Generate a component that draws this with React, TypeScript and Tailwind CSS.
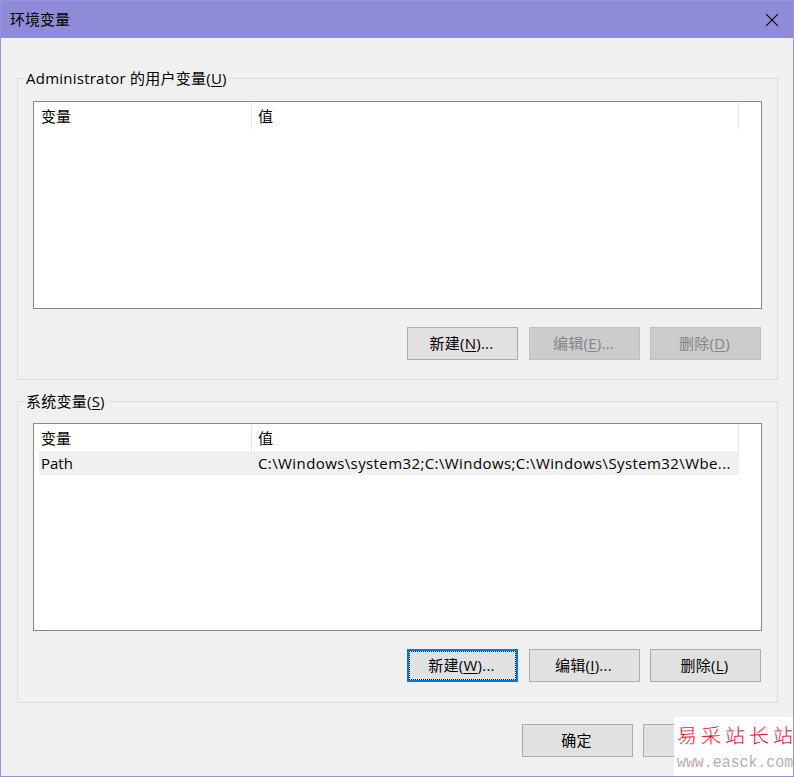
import type { ReactNode } from 'react';

const family = "font-['Open_Sans','Noto_Sans_CJK_SC',sans-serif]";

function Key({ children }: { children: string }) {
  return <span className="underline decoration-1 underline-offset-[2px] [text-decoration-skip-ink:none]">{children}</span>;
}

type ButtonProps = { children?: ReactNode; disabled?: boolean; focused?: boolean };

function Button({ children, disabled, focused }: ButtonProps) {
  const tone = disabled
    ? 'border border-[#bfbfbf] bg-[#cccccc] text-[#838383]'
    : focused
      ? 'border-2 border-[#0078d7] bg-[#e1e1e1]'
      : 'border border-[#adadad] bg-[#e1e1e1]';
  return (
    <button disabled={disabled} className={`h-[33px] w-[111px] shrink-0 tracking-[0.25px] ${tone}`}>
      <span
        className={`flex h-full items-center justify-center whitespace-nowrap pb-[2px] pr-[2px] leading-[18px] ${focused ? 'border border-dotted border-black' : ''}`}
      >
        <span>{children}</span>
      </span>
    </button>
  );
}

function VariableList({ rows }: { rows: { name: string; value: string }[] }) {
  return (
    <div className="h-[208px] w-[729px] border border-[#828790] bg-white pl-[5px] pt-px">
      <div className="flex h-[26px] w-[700px] leading-[26px]">
        <div className="w-[213px] border-r border-[#e5e5e5] pl-[2px]">变量</div>
        <div className="flex-1 border-r border-[#e5e5e5] pl-[6px]">值</div>
      </div>
      {rows.map((row) => (
        <div key={row.name} className="flex h-6 w-[700px] bg-[#f0f0f0] leading-6">
          <div className="w-[213px] pl-[2px]">{row.name}</div>
          <div className="flex-1 whitespace-nowrap pl-[6px] tracking-[0.4px]">{row.value}</div>
        </div>
      ))}
    </div>
  );
}

function Group({ title, className, children }: { title: ReactNode; className: string; children: ReactNode }) {
  return (
    <section className={`relative h-[302px] w-[761px] border border-[#dcdcdc] pl-[15px] ${className}`}>
      <h2 className="absolute -top-[12px] left-[6px] whitespace-nowrap bg-[#f0f0f0] px-[2px] leading-[22px] tracking-[0.24px]">{title}</h2>
      {children}
    </section>
  );
}

export default function App() {
  return (
    <div className={`relative h-[777px] w-[794px] overflow-hidden border border-[#9893dc] bg-[#f0f0f0] text-[15px] text-black ${family}`}>
      <header className="flex h-[37px] items-center justify-between bg-[#908bd8] pl-[9px] pr-[15px]">
        <h1 className="leading-[37px]">环境变量</h1>
        <svg width="12" height="12" viewBox="0 0 12 12" stroke="#000" strokeWidth="1.1">
          <path d="M0 0l12 12M12 0L0 12" />
        </svg>
      </header>
      <main className="pl-4 pt-10">
        <Group className="pt-[22px]" title={<>Administrator 的用户变量(<Key>U</Key>)</>}>
          <VariableList rows={[]} />
          <div className="mt-[18px] flex pl-[374px]">
            <Button>新建(<Key>N</Key>)...</Button>
            <div className="ml-[11px] flex gap-[10px]">
              <Button disabled>编辑(<Key>E</Key>)...</Button>
              <Button disabled>删除(<Key>D</Key>)</Button>
            </div>
          </div>
        </Group>
        <div className="h-[21px]" />
        <Group className="pt-[21px]" title={<>系统变量(<Key>S</Key>)</>}>
          <VariableList
            rows={[{ name: 'Path', value: 'C:\\Windows\\system32;C:\\Windows;C:\\Windows\\System32\\Wbe...' }]}
          />
          <div className="mt-[18px] flex pl-[374px]">
            <Button focused>新建(<Key>W</Key>)...</Button>
            <div className="ml-[11px] flex gap-[10px]">
              <Button>编辑(<Key>I</Key>)...</Button>
              <Button>删除(<Key>L</Key>)</Button>
            </div>
          </div>
        </Group>
        <footer className="mt-[21px] flex gap-[10px] pl-[505px]">
          <Button>确定</Button>
          <Button />
        </footer>
      </main>
      <div className="absolute -bottom-px -right-px h-[60px] w-[120px] overflow-hidden whitespace-nowrap bg-white pl-[3px]">
        <div className="flex h-[36px] gap-1 font-['Noto_Sans_CJK_SC',sans-serif] text-[20px] font-light leading-[36px] text-[#e8102a]">
          {['易', '采', '站', '长', '站'].map((char, i) => (
            <span key={i} className="w-5 -skew-y-3">{char}</span>
          ))}
        </div>
        <div className="w-[125px] origin-left scale-x-[0.93] font-['Liberation_Mono',monospace] text-[16px] leading-[20px] text-[#bdacae]">
          www.easck.com
        </div>
      </div>
    </div>
  );
}
